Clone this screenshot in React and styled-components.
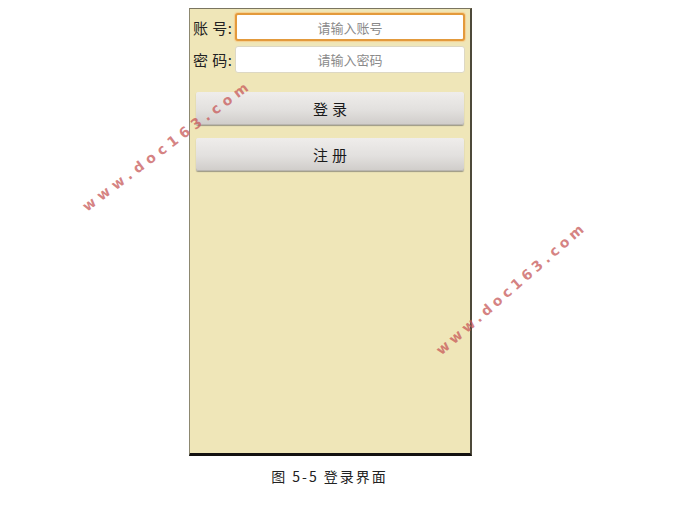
import React from 'react';
import styled, { createGlobalStyle } from 'styled-components';

const Global = createGlobalStyle`
  html, body { margin: 0; padding: 0; background: #fff; }
  body { font-family: "Noto Sans CJK SC", "Noto Sans", sans-serif; }
`;

const Page = styled.div`
  position: relative;
  width: 691px;
  height: 505px;
  overflow: hidden;
`;

const Figure = styled.div`
  margin-left: 189px;
  padding-top: 8px;
  width: 283px;
  display: flex;
  flex-direction: column;
  align-items: center;
`;

const Phone = styled.div`
  box-sizing: border-box;
  width: 283px;
  height: 448px;
  background: #efe6b8;
  border-top: 1px solid #7a7560;
  border-left: 1px solid #8d8870;
  border-right: 2px solid #4e4a3a;
  border-bottom: 3px solid #141210;
  padding: 4px 5px 0 3px;
  display: flex;
  flex-direction: column;
`;

const Row = styled.div`
  display: flex;
  align-items: center;
  height: 28px;
  margin-bottom: 4px;
`;

const Label = styled.span`
  width: 42px;
  font-size: 15px;
  color: #222;
  white-space: nowrap;
  letter-spacing: 0.5px;
`;

const Field = styled.input`
  box-sizing: border-box;
  flex: 1;
  height: ${p => (p.$focus ? '28px' : '27px')};
  border-radius: 3px;
  border: ${p => (p.$focus ? '2px solid #e39a3c' : '1px solid #ddd8c4')};
  box-shadow: ${p => (p.$focus ? '0 0 1px 1px #f6cf8e' : 'none')};
  background: #fff;
  text-align: center;
  font-family: "Noto Sans CJK SC", sans-serif;
  font-size: 13px;
  color: #333;
  outline: none;
  &::placeholder { color: #8a8a8a; }
`;

const Btn = styled.button`
  box-sizing: border-box;
  margin: ${p => p.$top}px 1px 0 3px;
  height: 33px;
  border: none;
  border-radius: 2px;
  background: linear-gradient(#efedeb, #e2e0de 55%, #cfccc9);
  box-shadow: 0 1px 1px #9c9886, inset 0 -1px 0 #b9b6b1;
  font-family: "Noto Sans CJK SC", sans-serif;
  font-size: 15px;
  letter-spacing: 4px;
  color: #1a1a1a;
  padding: 0 0 0 4px;
`;

const Caption = styled.div`
  margin-top: 10px;
  margin-left: -2px;
  font-size: 14px;
  color: #222;
  letter-spacing: 2px;
  font-family: "Noto Sans CJK SC", sans-serif;
`;

const Mark = styled.div`
  position: absolute;
  left: ${p => p.$x}px;
  top: ${p => p.$y}px;
  transform: rotate(${p => p.$r}deg);
  transform-origin: left center;
  font-family: "DejaVu Sans", sans-serif;
  font-weight: bold;
  font-size: 14px;
  letter-spacing: ${p => p.$sp}px;
  color: rgba(200, 90, 90, 0.75);
  white-space: nowrap;
  pointer-events: none;
`;

export default function App() {
  return (
    <Page>
      <Global />
      <Figure>
        <Phone>
          <Row>
            <Label>账 号:</Label>
            <Field $focus placeholder="请输入账号" />
          </Row>
          <Row>
            <Label>密 码:</Label>
            <Field placeholder="请输入密码" />
          </Row>
          <Btn $top={15}>登录</Btn>
          <Btn $top={13}>注册</Btn>
        </Phone>
        <Caption>图 5-5 登录界面</Caption>
      </Figure>
      <Mark $x={84} $y={200} $r={-37} $sp={5}>www.doc163.com</Mark>
      <Mark $x={438} $y={344} $r={-41} $sp={4}>www.doc163.com</Mark>
    </Page>
  );
}
